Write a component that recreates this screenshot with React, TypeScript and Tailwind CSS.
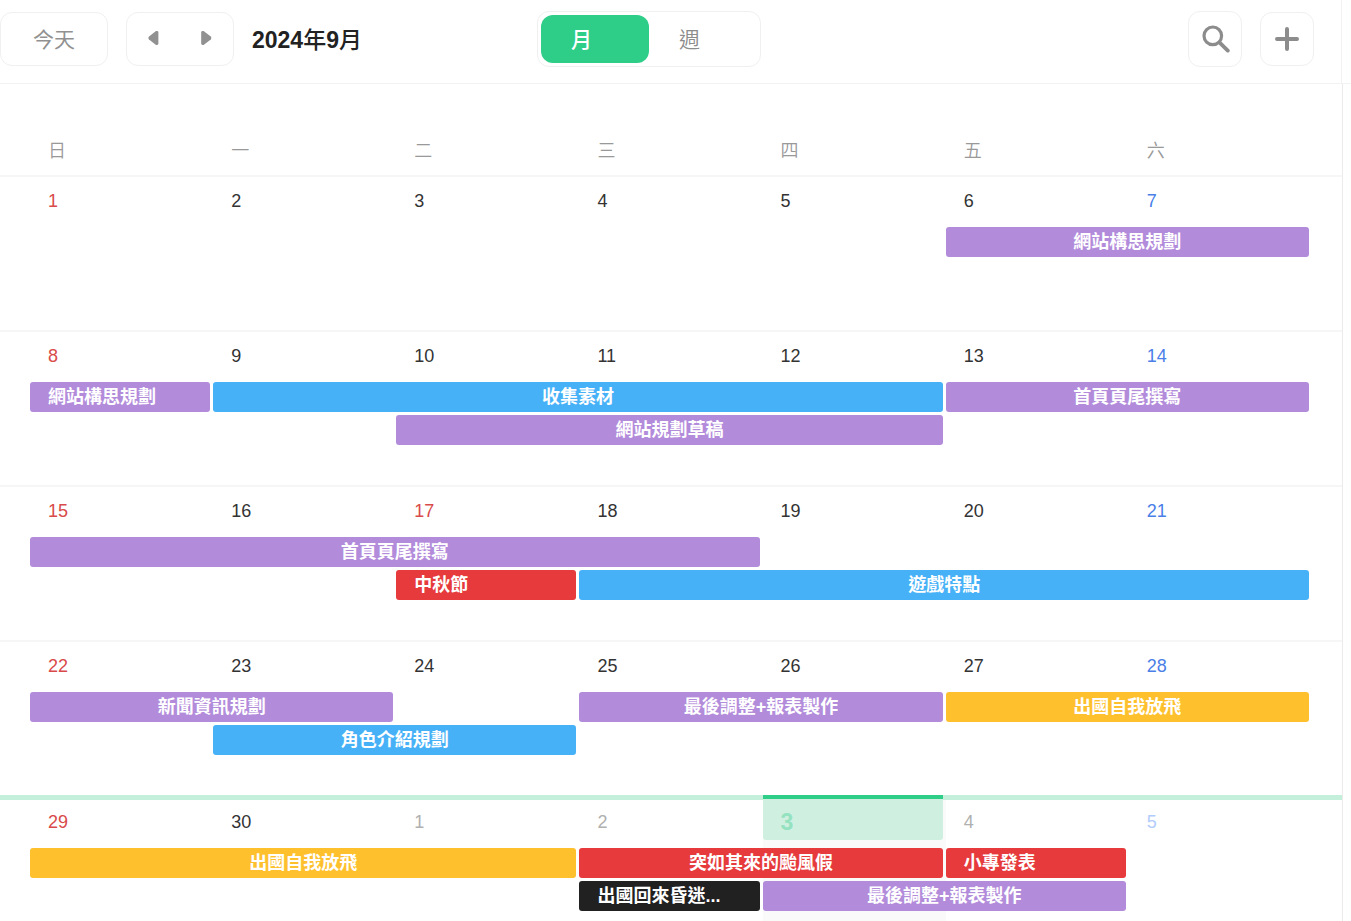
import React from "react";

type Tone = "purple" | "blue" | "red" | "yellow" | "black";

type CalendarEvent = {
  title: string;
  start: number;
  span: number;
  lane: number;
  tone: Tone;
};

type Week = {
  days: number[];
  events: CalendarEvent[];
};

const WEEKDAYS = ["日", "一", "二", "三", "四", "五", "六"];

const TONES: Record<Tone, string> = {
  purple: "bg-[#b28bdb]",
  blue: "bg-[#47b1f7]",
  red: "bg-[#e63a3c]",
  yellow: "bg-[#ffc02e]",
  black: "bg-[#212121]",
};

const WEEKS: Week[] = [
  {
    days: [1, 2, 3, 4, 5, 6, 7],
    events: [{ title: "網站構思規劃", start: 6, span: 2, lane: 1, tone: "purple" }],
  },
  {
    days: [8, 9, 10, 11, 12, 13, 14],
    events: [
      { title: "網站構思規劃", start: 1, span: 1, lane: 1, tone: "purple" },
      { title: "收集素材", start: 2, span: 4, lane: 1, tone: "blue" },
      { title: "首頁頁尾撰寫", start: 6, span: 2, lane: 1, tone: "purple" },
      { title: "網站規劃草稿", start: 3, span: 3, lane: 2, tone: "purple" },
    ],
  },
  {
    days: [15, 16, 17, 18, 19, 20, 21],
    events: [
      { title: "首頁頁尾撰寫", start: 1, span: 4, lane: 1, tone: "purple" },
      { title: "中秋節", start: 3, span: 1, lane: 2, tone: "red" },
      { title: "遊戲特點", start: 4, span: 4, lane: 2, tone: "blue" },
    ],
  },
  {
    days: [22, 23, 24, 25, 26, 27, 28],
    events: [
      { title: "新聞資訊規劃", start: 1, span: 2, lane: 1, tone: "purple" },
      { title: "最後調整+報表製作", start: 4, span: 2, lane: 1, tone: "purple" },
      { title: "出國自我放飛", start: 6, span: 2, lane: 1, tone: "yellow" },
      { title: "角色介紹規劃", start: 2, span: 2, lane: 2, tone: "blue" },
    ],
  },
];

const CURRENT_WEEK: Week = {
  days: [29, 30, 1, 2, 3, 4, 5],
  events: [
    { title: "出國自我放飛", start: 1, span: 3, lane: 1, tone: "yellow" },
    { title: "突如其來的颱風假", start: 4, span: 2, lane: 1, tone: "red" },
    { title: "小專發表", start: 6, span: 1, lane: 1, tone: "red" },
    { title: "出國回來昏迷...", start: 4, span: 1, lane: 2, tone: "black" },
    { title: "最後調整+報表製作", start: 5, span: 2, lane: 2, tone: "purple" },
  ],
};

const HOLIDAYS = [17];

function dayColor(day: number, column: number, nextMonth: boolean) {
  if (nextMonth) return column === 6 ? "text-[#b3cdfb]" : "text-[#b0b0b0]";
  if (column === 0 || HOLIDAYS.includes(day)) return "text-[#d94a4a]";
  if (column === 6) return "text-[#4a7fe8]";
  return "text-[#333333]";
}

function EventBar({ event }: { event: CalendarEvent }) {
  const align = event.span === 1 ? "text-left" : "text-center";
  return (
    <button
      type="button"
      className={`mr-[3px] h-[30px] min-w-0 truncate rounded-[3px] px-[18px] text-[18px] leading-[30px] font-bold text-white ${align} ${TONES[event.tone]}`}
      style={{ gridColumn: `${event.start} / span ${event.span}`, gridRow: event.lane + 1 }}
    >
      {event.title}
    </button>
  );
}

function WeekRow({ week }: { week: Week }) {
  return (
    <section className="grid min-h-[155px] grid-cols-7 grid-rows-[47px_30px_30px_1fr] gap-y-[3px] border-t-2 border-[#f6f6f6] pr-[30px] pl-[30px]">
      {week.days.map((day, i) => (
        <time
          key={day}
          className={`row-start-1 pt-[12px] pl-[18px] text-[18px] leading-[24px] ${dayColor(day, i, false)}`}
          style={{ gridColumn: i + 1 }}
        >
          {day}
        </time>
      ))}
      {week.events.map((event) => (
        <EventBar key={`${event.lane}-${event.start}`} event={event} />
      ))}
    </section>
  );
}

function CurrentWeekRow({ week }: { week: Week }) {
  return (
    <section className="grid flex-1 grid-cols-7 grid-rows-[45px_30px_30px_1fr] gap-y-[3px] border-t-[5px] border-[#c3efdb] pr-[30px] pl-[30px]">
      <div className="col-start-5 row-start-1 row-end-5 bg-[#fafafa]" />
      {week.days.map((day, i) =>
        i === 4 ? (
          <time
            key={day}
            className="row-start-1 -mt-[5px] mr-[3px] mb-[5px] rounded-b-[3px] border-t-4 border-[#2ece89] bg-[#cff0e0] pt-[11px] pl-[18px] text-[23px] leading-[24px] font-bold text-[#94e2c0]"
            style={{ gridColumn: i + 1 }}
          >
            {day}
          </time>
        ) : (
          <time
            key={day}
            className={`row-start-1 pt-[10px] pl-[18px] text-[18px] leading-[24px] ${dayColor(day, i, i > 1)}`}
            style={{ gridColumn: i + 1 }}
          >
            {day}
          </time>
        ),
      )}
      {week.events.map((event) => (
        <EventBar key={`${event.lane}-${event.start}`} event={event} />
      ))}
    </section>
  );
}

function Toolbar() {
  return (
    <header className="border-b border-[#f2f2f2] pr-[9px]">
      <div className="grid h-[83px] grid-cols-[537fr_224px_553fr] items-start border-r border-[#f2f2f2] pt-[11px] pr-[27px]">
        <div className="flex items-center gap-[18px] pt-px whitespace-nowrap">
          <button
            type="button"
            className="h-[54px] w-[108px] rounded-xl border border-[#f0f0f0] pt-[2px] text-[21px] text-[#919191]"
          >
            今天
          </button>
          <div className="flex h-[54px] w-[108px] rounded-xl border border-[#f0f0f0] text-[#919191]">
            <button type="button" aria-label="上個月" className="flex flex-1 items-center justify-center pb-[2px]">
              <svg width="12" height="16" viewBox="0 0 12 16" fill="currentColor">
                <path d="M9 1H8L1 6.6Q-0.2 8 1 9.4L8 15H9Q10.4 15 10.4 13.6V2.4Q10.4 1 9 1Z" />
              </svg>
            </button>
            <button type="button" aria-label="下個月" className="flex flex-1 items-center justify-center pb-[2px]">
              <svg width="12" height="16" viewBox="0 0 12 16" fill="currentColor">
                <path d="M1.6 1H2.6L9.8 6.6Q11 8 9.8 9.4L2.6 15H1.6Q0.2 15 0.2 13.6V2.4Q0.2 1 1.6 1Z" />
              </svg>
            </button>
          </div>
          <h1 className="pt-[2px] text-[23px] leading-[32px] font-medium text-[#222222]">
            <b>2024</b>年<b>9</b>月
          </h1>
        </div>
        <div className="flex h-[56px] rounded-xl border border-[#f0f0f0] p-[3px] text-[21px]">
          <button
            type="button"
            aria-pressed="true"
            className="flex-1 rounded-xl bg-[#2ece89] pt-[2px] pl-[30px] text-left font-medium text-white"
          >
            月
          </button>
          <button
            type="button"
            aria-pressed="false"
            className="flex-1 pt-[2px] pl-[30px] text-left font-[350] text-[#8c8c8c]"
          >
            週
          </button>
        </div>
        <div className="flex items-center justify-end gap-[18px] text-[#8c8c8c]">
          <button
            type="button"
            aria-label="搜尋"
            className="flex h-[56px] w-[54px] items-center justify-center rounded-xl border border-[#f0f0f0]"
          >
            <svg width="30" height="30" viewBox="0 0 30 30" fill="none" stroke="currentColor">
              <circle cx="12.8" cy="11.8" r="8.8" strokeWidth="3.2" />
              <path d="M19.4 18.4L27.8 26.6" strokeWidth="3.8" strokeLinecap="round" />
            </svg>
          </button>
          <button
            type="button"
            aria-label="新增"
            className="flex h-[54px] w-[54px] items-center justify-center rounded-xl border border-[#f0f0f0]"
          >
            <svg width="26" height="26" viewBox="0 0 26 26" fill="none" stroke="currentColor">
              <path d="M13 3V23M3 13H23" strokeWidth="4" strokeLinecap="round" />
            </svg>
          </button>
        </div>
      </div>
    </header>
  );
}

export default function App() {
  return (
    <div className="flex min-h-screen flex-col bg-white font-['Liberation_Sans','Noto_Sans_CJK_TC',sans-serif]">
      <Toolbar />
      <main className="mr-[8px] flex flex-1 flex-col border-r border-[#ebebeb]">
        <div className="grid h-[91px] grid-cols-7 items-end pr-[30px] pb-[11px] pl-[30px] text-[18px] leading-[26px] font-[350] text-[#999999]">
          {WEEKDAYS.map((name) => (
            <span key={name} className="pl-[18px]">
              {name}
            </span>
          ))}
        </div>
        {WEEKS.map((week) => (
          <WeekRow key={week.days[0]} week={week} />
        ))}
        <CurrentWeekRow week={CURRENT_WEEK} />
      </main>
    </div>
  );
}
